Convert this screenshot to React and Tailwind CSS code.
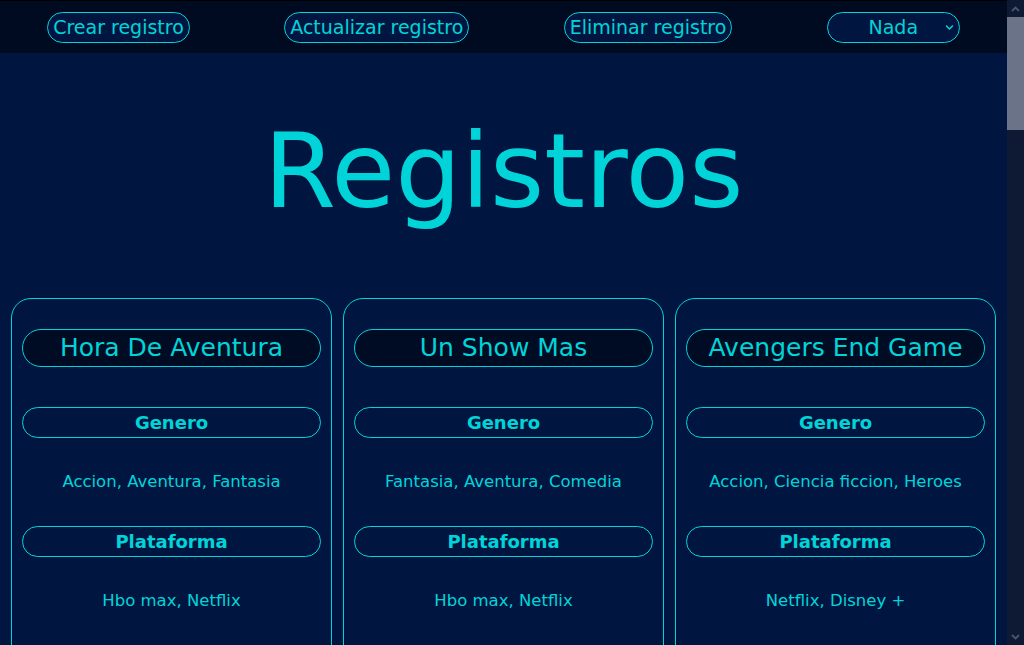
import React from "react";

const registros = [
  {
    id: 1,
    titulo: "Hora De Aventura",
    genero: "Accion, Aventura, Fantasia",
    plataforma: "Hbo max, Netflix",
  },
  {
    id: 2,
    titulo: "Un Show Mas",
    genero: "Fantasia, Aventura, Comedia",
    plataforma: "Hbo max, Netflix",
  },
  {
    id: 3,
    titulo: "Avengers End Game",
    genero: "Accion, Ciencia ficcion, Heroes",
    plataforma: "Netflix, Disney +",
  },
];

function NavButton({ children }) {
  return (
    <button className="h-[31px] px-[5px] rounded-full border border-[#00d4d8] bg-[#001641] text-[#00d4d8] text-[19px] leading-none">
      {children}
    </button>
  );
}

function Seccion({ label, value }) {
  return (
    <>
      <div className="h-[31px] flex items-center justify-center rounded-full border border-[#00d4d8] text-[18px] font-bold">
        {label}
      </div>
      <p className="pt-[32px] pb-[32px] text-[16.5px] leading-6 text-center">{value}</p>
    </>
  );
}

function Card({ item }) {
  return (
    <div className="border border-[#00d4d8] rounded-t-[20px] px-[10px] pt-[30px] min-h-[900px]">
      <div className="h-[38px] flex items-center justify-center rounded-full border border-[#00d4d8] bg-[#000b24] text-[25px]">
        {item.titulo}
      </div>
      <div className="h-10" />
      <Seccion label="Genero" value={item.genero} />
      <Seccion label="Plataforma" value={item.plataforma} />
    </div>
  );
}

// barra de scroll dibujada (el navegador headless no la muestra)
function ScrollBar() {
  return (
    <div className="w-[17px] h-full flex flex-col bg-[#0e1a33]">
      <div className="h-[17px] flex items-center justify-center">
        <svg width="9" height="6" viewBox="0 0 9 6" fill="none" stroke="#4b5568" strokeWidth="1.8">
          <path d="M1 5 L4.5 1.5 L8 5" />
        </svg>
      </div>
      <div className="h-[113px] bg-[#6b7389]" />
      <div className="flex-1" />
      <div className="h-[17px] flex items-center justify-center">
        <svg width="9" height="6" viewBox="0 0 9 6" fill="none" stroke="#4b5568" strokeWidth="1.8">
          <path d="M1 1 L4.5 4.5 L8 1" />
        </svg>
      </div>
    </div>
  );
}

export default function App() {
  return (
    <div className="h-screen flex overflow-hidden bg-[#001641] text-[#00d4d8] font-['DejaVu_Sans',sans-serif]">
      <div className="flex-1 min-w-0 overflow-hidden">
        {/* Nav */}
        <nav className="h-[53px] border-t border-black bg-[#000b22] flex items-center justify-around">
          <NavButton>Crear registro</NavButton>
          <NavButton>Actualizar registro</NavButton>
          <NavButton>Eliminar registro</NavButton>
          <div className="relative">
            <select className="appearance-none w-[133px] h-[31px] rounded-full border border-[#00d4d8] bg-[#001641] text-[#00d4d8] text-[19px] text-center outline-none">
              <option>Nada</option>
              <option>Crear</option>
              <option>Actualizar</option>
              <option>Eliminar</option>
            </select>
            <svg
              className="pointer-events-none absolute right-[6px] top-[12px] w-[9px] h-[7px]"
              viewBox="0 0 9 7"
              fill="none"
              stroke="#00d4d8"
              strokeWidth="1.6"
              strokeLinecap="round"
              strokeLinejoin="round"
            >
              <path d="M1.5 2 L4.5 5 L7.5 2" />
            </svg>
          </div>
        </nav>

        {/* Titulo */}
        <h1 className="pt-[66px] pb-[75px] text-center text-[104px] leading-none">Registros</h1>

        {/* Tarjetas */}
        <section className="grid grid-cols-3 gap-[11px] px-[11px]">
          {registros.map((item) => (
            <Card key={item.id} item={item} />
          ))}
        </section>
      </div>
      <ScrollBar />
    </div>
  );
}
